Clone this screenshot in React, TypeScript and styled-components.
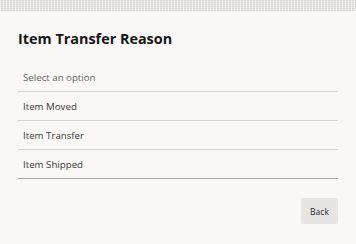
import styled, { createGlobalStyle } from 'styled-components'

const GlobalStyle = createGlobalStyle`
  html, body {
    margin: 0;
    padding: 0;
    background: #f9f8f6;
    font-family: "Open Sans", "Noto Sans", sans-serif;
  }
`

const Page = styled.div`
  width: 356px;
  height: 244px;
  display: flex;
  flex-direction: column;
  overflow: hidden;
`

const Backdrop = styled.div`
  height: 11px;
  flex-shrink: 0;
  background-color: #e8e6e4;
  background-image:
    repeating-linear-gradient(90deg, rgba(255, 255, 255, 0.5) 0 1px, transparent 1px 3px),
    repeating-linear-gradient(0deg, rgba(200, 198, 196, 0.5) 0 1px, transparent 1px 2px);
`

const Dialog = styled.div`
  flex: 1;
  display: flex;
  flex-direction: column;
  padding: 0 18px;
  background: #f9f8f6;
`

const Title = styled.h2`
  margin: 0;
  padding-top: 18px;
  height: 34px;
  font-size: 14.4px;
  font-weight: 700;
  color: #161616;
`

const OptionList = styled.div`
  display: flex;
  flex-direction: column;
`

const Option = styled.div<{ $placeholder?: boolean; $last?: boolean }>`
  height: 28px;
  display: flex;
  align-items: center;
  padding-left: 5px;
  font-size: 9.7px;
  color: ${(p) => (p.$placeholder ? '#62615f' : '#3a3938')};
  border-bottom: 1px solid ${(p) => (p.$last ? '#a8a7a5' : '#d4d3d1')};
`

const Footer = styled.div`
  display: flex;
  justify-content: flex-end;
  padding-top: 19px;
`

const Button = styled.button`
  width: 37px;
  height: 26px;
  border: none;
  border-radius: 2px;
  background: #e6e5e4;
  color: #2a2a2a;
  font-family: "Open Sans", "Noto Sans", sans-serif;
  font-size: 8.5px;
  padding: 0;
`

const options = ['Item Moved', 'Item Transfer', 'Item Shipped']

const App = () => {
  return (
    <Page>
      <GlobalStyle />
      <Backdrop />
      <Dialog>
        <Title>Item Transfer Reason</Title>
        <OptionList>
          <Option $placeholder>Select an option</Option>
          {options.map((o, i) => (
            <Option key={o} $last={i === options.length - 1}>
              {o}
            </Option>
          ))}
        </OptionList>
        <Footer>
          <Button>Back</Button>
        </Footer>
      </Dialog>
    </Page>
  )
}

export default App
